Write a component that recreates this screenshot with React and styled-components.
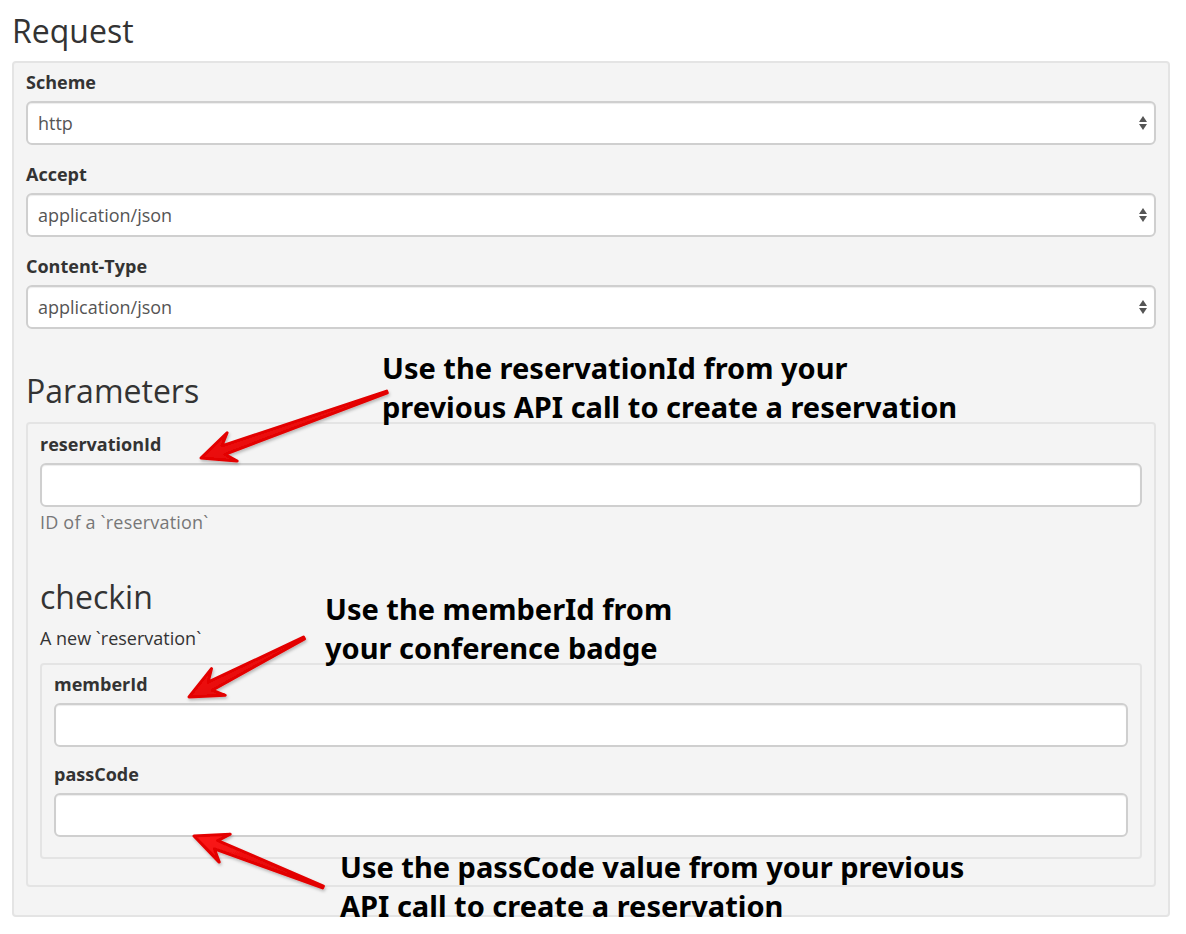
import React from "react";
import styled, { createGlobalStyle } from "styled-components";

const GlobalStyle = createGlobalStyle`
  html, body { margin: 0; padding: 0; background: #ffffff; }
  body {
    font-family: "Open Sans", "Noto Sans", "DejaVu Sans", sans-serif;
    color: #333333;
    font-size: 18px;
  }
  * { box-sizing: border-box; }
`;

const Page = styled.div`
  position: relative;
  width: 1186px;
  min-height: 934px;
  padding: 12px 16px 0 12px;
`;

const Title = styled.h2`
  margin: 0 0 11px 0;
  font-size: 32px;
  line-height: 38px;
  font-weight: 400;
  color: #333333;
`;

const SubTitle = styled.h3`
  margin: ${(p) => p.$mt || 0}px 0 ${(p) => p.$mb || 0}px 0;
  font-size: 32px;
  line-height: 38px;
  font-weight: 400;
  color: #333333;
`;

const Panel = styled.div`
  background: #f4f4f4;
  border: 2px solid #e4e4e4;
  border-radius: 4px;
  padding: ${(p) => p.$pad};
`;

const Group = styled.div`
  margin-bottom: ${(p) => p.$mb ?? 17}px;
`;

const Label = styled.label`
  display: block;
  font-size: 18px;
  line-height: 25px;
  font-weight: 700;
  color: #333333;
  margin-bottom: 6px;
`;

const SelectWrap = styled.div`
  position: relative;
`;

const Select = styled.select`
  display: block;
  width: 100%;
  height: 44px;
  padding: 0 30px 0 10px;
  font-family: "Open Sans", "Noto Sans", sans-serif;
  font-size: 18px;
  color: #555555;
  background: #ffffff;
  border: 2px solid #cfcfcf;
  border-radius: 6px;
  box-shadow: inset 0 1px 1px rgba(0, 0, 0, 0.075);
  appearance: none;
  -webkit-appearance: none;
  outline: none;
`;

const Caret = styled.svg`
  position: absolute;
  right: 8px;
  top: 50%;
  transform: translateY(-50%);
  pointer-events: none;
`;

const Input = styled.input`
  display: block;
  width: 100%;
  height: 44px;
  padding: 0 10px;
  font-family: "Open Sans", "Noto Sans", sans-serif;
  font-size: 18px;
  color: #555555;
  background: #ffffff;
  border: 2px solid #cfcfcf;
  border-radius: 6px;
  box-shadow: inset 0 1px 1px rgba(0, 0, 0, 0.075);
  outline: none;
`;

const Help = styled.p`
  margin: 3px 0 0 0;
  font-size: 18px;
  line-height: 25px;
  color: #777777;
  letter-spacing: 0.2px;
`;

const Description = styled.p`
  margin: 10px 0 12px 0;
  font-size: 18px;
  line-height: 25px;
  color: #333333;
`;

const Overlay = styled.svg`
  position: absolute;
  left: 0;
  top: 0;
  width: 1186px;
  height: 934px;
  pointer-events: none;
`;

const Note = styled.div`
  position: absolute;
  left: ${(p) => p.$x}px;
  top: ${(p) => p.$y}px;
  font-family: "Noto Sans", "Open Sans", "DejaVu Sans", sans-serif;
  font-weight: 700;
  font-size: 29px;
  line-height: 39px;
  color: #000000;
  white-space: nowrap;
`;

function SelectField({ label, value }) {
  return (
    <Group>
      <Label>{label}</Label>
      <SelectWrap>
        <Select defaultValue={value}>
          <option value={value}>{value}</option>
        </Select>
        <Caret width="10" height="16" viewBox="0 0 10 16">
          <path d="M1 7 L5 1 L9 7 Z" fill="#555" />
          <path d="M1 9 L5 15 L9 9 Z" fill="#555" />
        </Caret>
      </SelectWrap>
    </Group>
  );
}

function arrowPath(tip, tail) {
  const hl = 33;
  const hw = 15;
  const sw = 9;
  const tw = 2;
  const dx = tail[0] - tip[0];
  const dy = tail[1] - tip[1];
  const L = Math.hypot(dx, dy);
  const d = [dx / L, dy / L];
  const n = [-d[1], d[0]];
  const pt = (a, b) =>
    `${(tip[0] + d[0] * a + n[0] * b).toFixed(1)},${(tip[1] + d[1] * a + n[1] * b).toFixed(1)}`;
  return `M${pt(0, 0)} L${pt(hl, -hw)} L${pt(hl * 0.72, -sw / 2)} L${pt(L, -tw / 2)} L${pt(
    L,
    tw / 2
  )} L${pt(hl * 0.72, sw / 2)} L${pt(hl, hw)} Z`;
}

const arrows = [
  { tip: [201, 458], tail: [387, 392] },
  { tip: [189, 697], tail: [304, 638] },
  { tip: [194, 836], tail: [323, 887] },
];

export default function App() {
  return (
    <>
      <GlobalStyle />
      <Page>
        <Title>Request</Title>
        <Panel $pad="7px 12px 28px 12px">
          <SelectField label="Scheme" value="http" />
          <SelectField label="Accept" value="application/json" />
          <SelectField label="Content-Type" value="application/json" />

          <SubTitle $mt={43} $mb={12}>Parameters</SubTitle>
          <Panel $pad="8px 12px 26px 12px">
            <Group $mb={0}>
              <Label>reservationId</Label>
              <Input type="text" />
              <Help>ID of a `reservation`</Help>
            </Group>

            <SubTitle $mt={43}>checkin</SubTitle>
            <Description>A new `reservation`</Description>
            <Panel $pad="7px 12px 5px 12px">
              <Group $mb={15}>
                <Label>memberId</Label>
                <Input type="text" />
              </Group>
              <Group $mb={15}>
                <Label>passCode</Label>
                <Input type="text" />
              </Group>
            </Panel>
          </Panel>
        </Panel>

        <Overlay viewBox="0 0 1186 934">
          <defs>
            <linearGradient id="redg" x1="0" y1="0" x2="1" y2="1">
              <stop offset="0" stopColor="#ff1a1a" />
              <stop offset="1" stopColor="#d40000" />
            </linearGradient>
            <filter id="sh" x="-20%" y="-20%" width="140%" height="140%">
              <feDropShadow dx="1" dy="2" stdDeviation="1.5" floodColor="#000" floodOpacity="0.25" />
            </filter>
          </defs>
          {arrows.map((a, i) => (
            <path
              key={i}
              d={arrowPath(a.tip, a.tail)}
              fill="url(#redg)"
              stroke="#e30000"
              strokeWidth="3"
              strokeLinejoin="round"
              filter="url(#sh)"
            />
          ))}
        </Overlay>

        <Note $x={382} $y={348}>
          Use the reservationId from your
          <br />
          previous API call to create a reservation
        </Note>
        <Note $x={325} $y={589}>
          Use the memberId from
          <br />
          your conference badge
        </Note>
        <Note $x={340} $y={847}>
          Use the passCode value from your previous
          <br />
          API call to create a reservation
        </Note>
      </Page>
    </>
  );
}
